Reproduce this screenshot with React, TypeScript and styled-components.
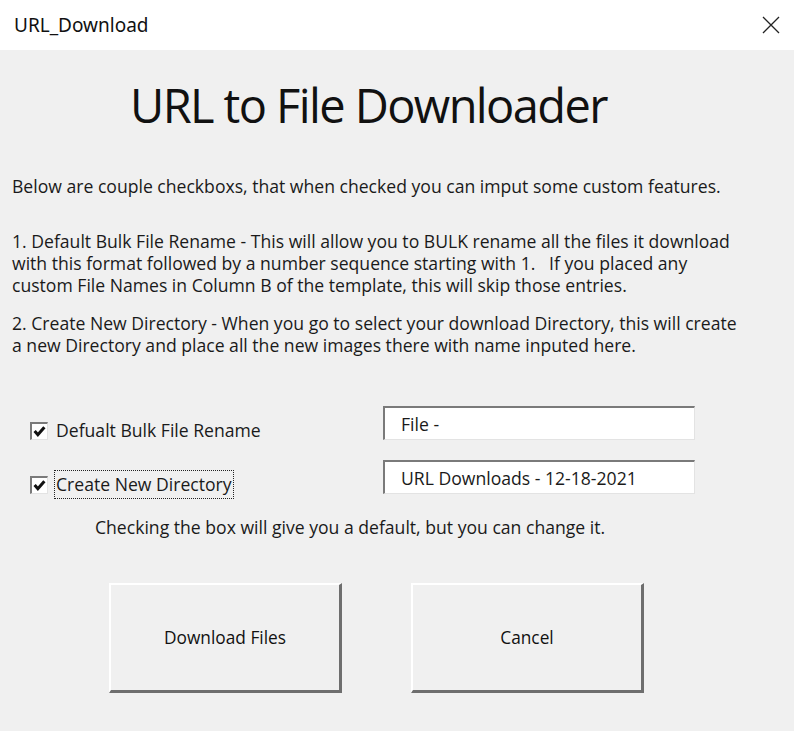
import styled, { createGlobalStyle } from "styled-components";

const GlobalStyle = createGlobalStyle`
  html, body {
    margin: 0;
    padding: 0;
    background: #f0f0f0;
  }
  body {
    font-family: "Open Sans", "Noto Sans", sans-serif;
    color: #1a1a1a;
  }
`;

const Window = styled.div`
  width: 794px;
  height: 731px;
  background: #f0f0f0;
  display: flex;
  flex-direction: column;
  overflow: hidden;
`;

const TitleBar = styled.div`
  height: 50px;
  background: #ffffff;
  display: flex;
  align-items: center;
  justify-content: space-between;
  padding: 0 0 0 14px;
`;

const WindowName = styled.span`
  font-family: "Noto Sans", sans-serif;
  font-size: 19px;
  color: #111;
`;

const CloseButton = styled.button`
  width: 46px;
  height: 50px;
  border: none;
  background: transparent;
  display: flex;
  align-items: center;
  justify-content: center;
  padding: 0;
`;

const Body = styled.div`
  padding: 0 0 0 12px;
  display: flex;
  flex-direction: column;
`;

const Heading = styled.h1`
  margin: 25px 0 0 118px;
  font-weight: 400;
  font-size: 47px;
  line-height: 60px;
  letter-spacing: -1.6px;
  color: #111;
`;

const Paragraph = styled.p<{ $top: number }>`
  margin: ${(p) => p.$top}px 0 0;
  font-size: 17.6px;
  line-height: 22px;
  white-space: pre-wrap;
`;

const Options = styled.div`
  margin: 50px 0 0 18px;
  display: grid;
  grid-template-columns: 353px 312px;
  row-gap: 16px;
  align-items: start;
`;

const CheckLabel = styled.label`
  display: flex;
  align-items: center;
  gap: 7px;
  padding-top: 11px;
  font-size: 17.6px;
`;

const CheckBox = styled.span`
  width: 18px;
  height: 18px;
  box-sizing: border-box;
  background: #fff;
  border-top: 2px solid #7a7a7a;
  border-left: 2px solid #7a7a7a;
  border-right: 1px solid #e3e3e3;
  border-bottom: 1px solid #e3e3e3;
  display: flex;
  align-items: center;
  justify-content: center;
`;

const LabelText = styled.span<{ $focused?: boolean }>`
  padding: 2px 1px;
  outline: ${(p) => (p.$focused ? "1px dotted #222" : "none")};
  line-height: 23px;
`;

const TextBox = styled.div`
  height: 34px;
  box-sizing: border-box;
  background: #fff;
  border-top: 2px solid #7a7a7a;
  border-left: 2px solid #7a7a7a;
  border-right: 1px solid #e3e3e3;
  border-bottom: 1px solid #e3e3e3;
  padding: 0 0 0 16px;
  display: flex;
  align-items: center;
  font-size: 17.6px;
`;

const Hint = styled.p`
  margin: 18px 0 0 83px;
  font-size: 17.6px;
  line-height: 22px;
`;

const ButtonRow = styled.div`
  margin: 45px 0 0 97px;
  display: flex;
  gap: 69px;
`;

const Button = styled.button`
  width: 233px;
  height: 110px;
  box-sizing: border-box;
  background: #f0f0f0;
  border-top: 2px solid #ffffff;
  border-left: 2px solid #ffffff;
  border-right: 3px solid #6e6e6e;
  border-bottom: 3px solid #6e6e6e;
  font-family: "Open Sans", "Noto Sans", sans-serif;
  font-size: 17.3px;
  color: #111;
  padding: 0;
`;

function Check() {
  return (
    <CheckBox>
      <svg width="13" height="13" viewBox="0 0 12 12">
        <path d="M1.5 5.5 L4.5 9 L10.5 2" fill="none" stroke="#111" strokeWidth="2.8" />
      </svg>
    </CheckBox>
  );
}

export default function App() {
  return (
    <Window>
      <GlobalStyle />
      <TitleBar>
        <WindowName>URL_Download</WindowName>
        <CloseButton aria-label="Close">
          <svg width="18" height="18" viewBox="0 0 18 18">
            <path d="M1 1 L17 17 M17 1 L1 17" stroke="#222" strokeWidth="1.3" />
          </svg>
        </CloseButton>
      </TitleBar>
      <Body>
        <Heading>URL to File Downloader</Heading>
        <Paragraph $top={40}>
          Below are couple checkboxs, that when checked you can imput some custom features.
        </Paragraph>
        <Paragraph $top={33}>
          {"1. Default Bulk File Rename - This will allow you to BULK rename all the files it download\nwith this format followed by a number sequence starting with 1.   If you placed any\ncustom File Names in Column B of the template, this will skip those entries."}
        </Paragraph>
        <Paragraph $top={16}>
          {"2. Create New Directory - When you go to select your download Directory, this will create\na new Directory and place all the new images there with name inputed here."}
        </Paragraph>
        <Options>
          <CheckLabel>
            <Check />
            <LabelText>Defualt Bulk File Rename</LabelText>
          </CheckLabel>
          <TextBox>File -</TextBox>
          <CheckLabel>
            <Check />
            <LabelText $focused>Create New Directory</LabelText>
          </CheckLabel>
          <TextBox>URL Downloads - 12-18-2021</TextBox>
        </Options>
        <Hint>Checking the box will give you a default, but you can change it.</Hint>
        <ButtonRow>
          <Button>Download Files</Button>
          <Button>Cancel</Button>
        </ButtonRow>
      </Body>
    </Window>
  );
}
